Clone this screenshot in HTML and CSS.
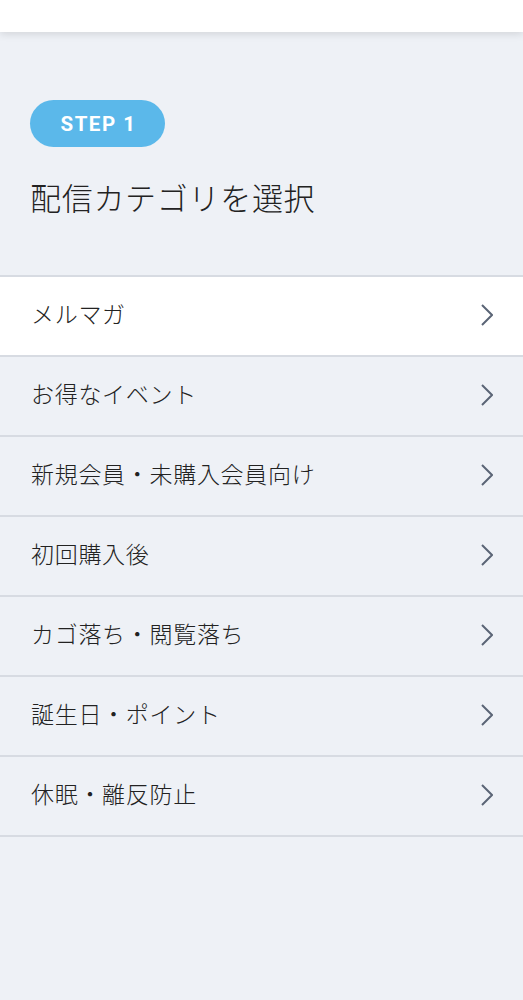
FILE: index.html
```html
<!DOCTYPE html>
<html lang="ja">
<head>
<meta charset="utf-8">
<link rel="stylesheet" href="styles.css">
</head>
<body>
<header class="topbar"></header>
<main class="main">
  <section class="intro">
    <span class="badge">STEP 1</span>
    <h1 class="title">配信カテゴリを選択</h1>
  </section>
  <ul class="list">
    <li class="row active"><span class="label">メルマガ</span><svg class="chev" viewBox="0 0 12 22"><path d="M1 1 L11 11 L1 21"/></svg></li>
    <li class="row"><span class="label">お得なイベント</span><svg class="chev" viewBox="0 0 12 22"><path d="M1 1 L11 11 L1 21"/></svg></li>
    <li class="row"><span class="label">新規会員・未購入会員向け</span><svg class="chev" viewBox="0 0 12 22"><path d="M1 1 L11 11 L1 21"/></svg></li>
    <li class="row"><span class="label">初回購入後</span><svg class="chev" viewBox="0 0 12 22"><path d="M1 1 L11 11 L1 21"/></svg></li>
    <li class="row"><span class="label">カゴ落ち・閲覧落ち</span><svg class="chev" viewBox="0 0 12 22"><path d="M1 1 L11 11 L1 21"/></svg></li>
    <li class="row"><span class="label">誕生日・ポイント</span><svg class="chev" viewBox="0 0 12 22"><path d="M1 1 L11 11 L1 21"/></svg></li>
    <li class="row"><span class="label">休眠・離反防止</span><svg class="chev" viewBox="0 0 12 22"><path d="M1 1 L11 11 L1 21"/></svg></li>
  </ul>
</main>
</body>
</html>
```
FILE: styles.css
```css
* { box-sizing: border-box; }
html, body { margin: 0; padding: 0; }
body {
  background: #eef1f6;
  font-family: "Noto Sans CJK JP", "Noto Sans", sans-serif;
  color: #222;
  min-height: 1000px;
}
.topbar {
  height: 32px;
  background: #fff;
  box-shadow: 0 2px 8px rgba(0, 0, 0, 0.12);
  position: relative;
  z-index: 1;
}
.intro {
  padding: 68px 30px 0;
  height: 243px;
}
.badge {
  display: inline-flex;
  align-items: center;
  justify-content: center;
  width: 135px;
  height: 47px;
  border-radius: 24px;
  background: #5bb8ea;
  color: #fff;
  font-family: Roboto, "Noto Sans", sans-serif;
  font-weight: 700;
  font-size: 20.5px;
  letter-spacing: 1.5px;
  padding-left: 2px;
}
.title {
  margin: 25px 0 0 0;
  font-size: 31px;
  font-weight: 300;
  letter-spacing: 0.7px;
  line-height: 50px;
}
.list {
  list-style: none;
  margin: 0;
  padding: 0;
  border-top: 2px solid #d7dbe2;
}
.row {
  display: flex;
  align-items: center;
  justify-content: space-between;
  height: 80px;
  padding: 0 30px 0 31px;
  border-bottom: 2px solid #d7dbe2;
  font-size: 23px;
  font-weight: 300;
  letter-spacing: 0.7px;
}
.label {
  line-height: 1;
  margin-bottom: 5px;
}
.row.active { background: #fff; }
.chev {
  width: 12px;
  height: 22px;
  margin-bottom: 2px;
  fill: none;
  stroke: #5b6576;
  stroke-width: 2;
}
```
